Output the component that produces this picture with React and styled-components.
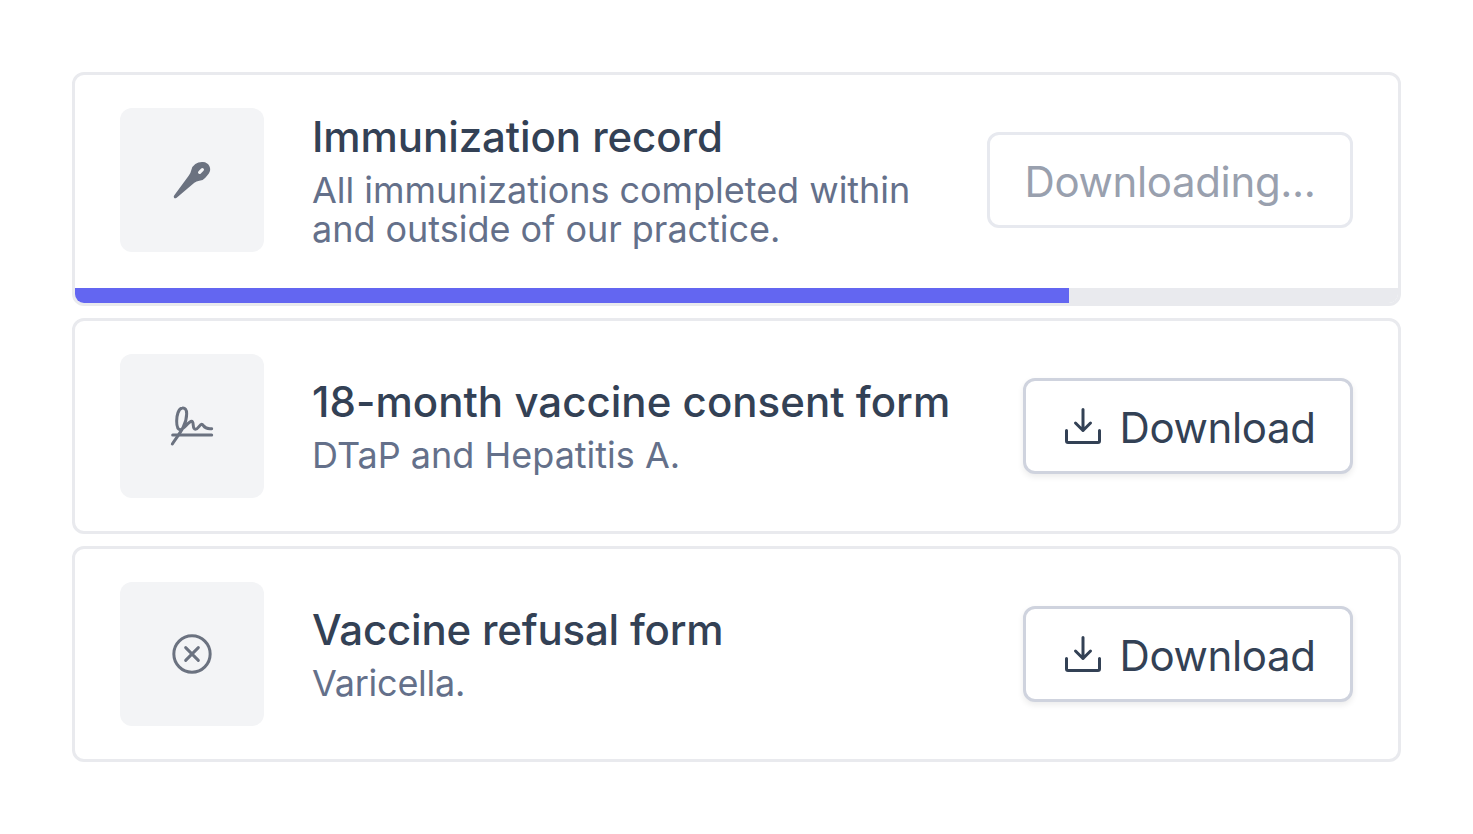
import React from 'react';
import styled, { createGlobalStyle } from 'styled-components';

const GlobalStyle = createGlobalStyle`
  *, *::before, *::after { box-sizing: border-box; }
  body { margin: 0; background: #fff; font-family: Inter, "Liberation Sans", sans-serif; }
`;

const List = styled.main`
  display: flex;
  flex-direction: column;
  gap: 12px;
  width: 1473px;
  padding: 72px;
`;

const Card = styled.article`
  border: 3px solid #e9eaee;
  border-radius: 12px;
  background: #fff;
  overflow: hidden;
`;

const CardBody = styled.div`
  display: flex;
  align-items: center;
  height: ${({ $loading }) => ($loading ? 213 : 210)}px;
  padding: 0 45px ${({ $loading }) => ($loading ? 3 : 0)}px;
`;

const Tile = styled.div`
  display: flex;
  align-items: center;
  justify-content: center;
  flex: none;
  width: 144px;
  height: 144px;
  margin-right: 48px;
  border-radius: 12px;
  background: #f3f4f6;
  color: #6b7280;
`;

const Info = styled.div`
  flex: 1;
  min-width: 0;
  padding-bottom: 5px;
  white-space: nowrap;
`;

const Title = styled.h2`
  margin: 0;
  font-size: 42px;
  line-height: 60px;
  font-weight: 500;
  letter-spacing: ${({ $spacing }) => $spacing}px;
  color: #334155;
`;

const Description = styled.p`
  margin: 4px 0 0;
  font-size: 36px;
  line-height: 39px;
  letter-spacing: ${({ $spacing }) => $spacing}px;
  color: #64708a;
  white-space: pre-line;
`;

const Button = styled.button`
  display: flex;
  align-items: center;
  flex: none;
  gap: 18.5px;
  width: 330px;
  height: 96px;
  padding: 3px 0 0 39px;
  border: 3px solid #cfd3de;
  border-radius: 12px;
  background: #fff;
  box-shadow: 0 3px 6px rgba(0, 0, 0, 0.08);
  font: 400 42px/60px Inter, "Liberation Sans", sans-serif;
  letter-spacing: -0.35px;
  color: #334155;

  svg { margin-top: -3px; }

  &:disabled {
    justify-content: center;
    width: 366px;
    padding: 3px 0 0;
    border-color: #e7e9ef;
    box-shadow: none;
    color: #99a0ae;
  }
`;

const Progress = styled.div`
  height: 15px;
  background: #e9eaee;
`;

const ProgressFill = styled.div`
  height: 100%;
  background: #6366f1;
`;

const Glyph = styled.svg`
  display: block;
  flex: none;
  fill: none;
  stroke: currentColor;
  stroke-linecap: round;
  stroke-linejoin: round;
`;

const NeedleIcon = () => (
  <Glyph width="64" height="60" viewBox="0 0 192 180">
    <path
      d="M43 136 L86 77 Q93 67 94 60 Q97 48 106 42 Q116 35 129 36 Q142 37 148 48 Q154 60 146 71 L136 83 Q130 91 118 92 Q109 93 103 98 L50 143 Q45 147 42 143 Q40 139 43 136 Z"
      fill="currentColor"
      stroke="none"
    />
    <path d="M119 67 L127 59" stroke="#f3f4f6" strokeWidth="10" />
  </Glyph>
);

const SignatureIcon = () => (
  <Glyph width="64" height="60" viewBox="0 3 192 180" strokeWidth="9">
    <path d="M38 120 H155" />
    <path d="M37 147 C50 125 80 95 80 56 C80 43 75 38 67 39 C55 40 50 62 50 78 C50 98 54 104 61 104 C73 104 84 80 95 79 C103 79 96 103 106 103 C114 103 119 88 125 88 C132 88 129 104 155 101" />
  </Glyph>
);

const RefusalIcon = () => (
  <Glyph width="64" height="60" viewBox="0 0 192 180" strokeWidth="9">
    <circle cx="96" cy="90" r="54.5" />
    <path d="M77 71 L115 109 M115 71 L77 109" />
  </Glyph>
);

const DownloadIcon = () => (
  <Glyph width="36" height="36" viewBox="0 0 36 36" strokeWidth="3">
    <path d="M1.5 22.5 V33 Q1.5 34.5 3 34.5 H33 Q34.5 34.5 34.5 33 V22.5" />
    <path d="M18 1.5 V22.5 M10.5 15 L18 22.5 L25.5 15" />
  </Glyph>
);

const documents = [
  {
    title: 'Immunization record',
    titleSpacing: -0.08,
    description: 'All immunizations completed within\nand outside of our practice.',
    descriptionSpacing: -0.03,
    icon: <NeedleIcon />,
    progress: 75.1,
  },
  {
    title: '18-month vaccine consent form',
    titleSpacing: 0.04,
    description: 'DTaP and Hepatitis A.',
    descriptionSpacing: 0,
    icon: <SignatureIcon />,
  },
  {
    title: 'Vaccine refusal form',
    titleSpacing: -0.2,
    description: 'Varicella.',
    descriptionSpacing: -0.25,
    icon: <RefusalIcon />,
  },
];

function DocumentCard({ title, titleSpacing, description, descriptionSpacing, icon, progress }) {
  const loading = progress !== undefined;
  return (
    <Card>
      <CardBody $loading={loading}>
        <Tile>{icon}</Tile>
        <Info>
          <Title $spacing={titleSpacing}>{title}</Title>
          <Description $spacing={descriptionSpacing}>{description}</Description>
        </Info>
        <Button disabled={loading}>
          {loading ? 'Downloading...' : <><DownloadIcon /><span>Download</span></>}
        </Button>
      </CardBody>
      {loading && (
        <Progress>
          <ProgressFill style={{ width: `${progress}%` }} />
        </Progress>
      )}
    </Card>
  );
}

export default function App() {
  return (
    <>
      <GlobalStyle />
      <List>
        {documents.map((doc) => <DocumentCard key={doc.title} {...doc} />)}
      </List>
    </>
  );
}
